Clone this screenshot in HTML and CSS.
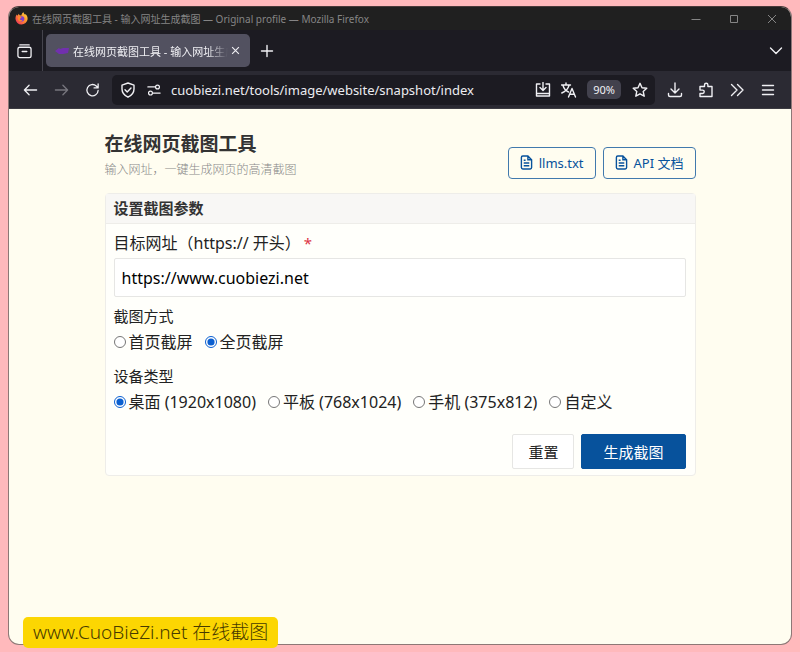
FILE: index.html
```html
<!DOCTYPE html>
<html lang="zh-CN">
<head>
  <meta charset="UTF-8" />
  <meta name="viewport" content="width=device-width, initial-scale=1.0"/>
  <title>在线网页截图工具 - 输入网址生成截图</title>
  <link rel="stylesheet" href="styles.css">
</head>
<body>

  <div class="window">
    <header class="titlebar">
      <svg class="logo" viewBox="0 0 16 16">
        <defs>
          <linearGradient id="fox" x1="1" y1="0" x2="0" y2="1">
            <stop offset="0" stop-color="#ffe14a"/>
            <stop offset=".4" stop-color="#ff9a2e"/>
            <stop offset="1" stop-color="#f0245e"/>
          </linearGradient>
        </defs>
        <path fill="url(#fox)" d="M2.2 3.2 3.4 4.6 4.4 2l1.4 2 2 .2C8.200 2.300 9 1 10.600.2c.1 1.500 1 2.100 2 3.200l.4-1c2 2 2.700 4 2.500 6.500A7.500 7.500 0 0 1 .6 8.600C.5 6.500 1 4.800 2.200 3.200z"/>
        <circle cx="8.300" cy="8.400" r="3.200" fill="#7a3fd0"/>
        <path fill="#ff8a2a" d="M3.500 6.200c1.500-.8 3-.3 4.700.6-.5 1-2 .7-2.400 1.700.4 1.500 2.300 1.800 3.700 1-.8 2-4 2.500-5.500.3z"/>
      </svg>
      <span class="window-title">在线网页截图工具 - 输入网址生成截图 — Original profile — Mozilla Firefox</span>
      <div class="window-buttons">
        <button title="最小化"><svg viewBox="0 0 10 10"><path d="M.5 5.500h9"/></svg></button>
        <button title="最大化"><svg viewBox="0 0 10 10"><path d="M1.500 1.500h7v7h-7z"/></svg></button>
        <button title="关闭"><svg viewBox="0 0 10 10"><path d="m1 1 8 8M9 1 1 9"/></svg></button>
      </div>
    </header>

    <div class="tabstrip">
      <button class="icon-btn sidebar-btn" title="标签页">
        <svg viewBox="0 0 16 16"><path d="M3 1.500h10"/><rect x="1" y="4" width="14" height="11" rx="2"/><path d="M5.500 8.500h5"/></svg>
      </button>
      <div class="tab">
        <svg class="favicon" viewBox="0 0 14 8"><path fill="#7130ae" d="M0 4 4 1l1 1 3-1h6l-1 5-5 1H4z"/></svg>
        <span class="tab-title">在线网页截图工具 - 输入网址生成截图</span>
        <button class="tab-close" title="关闭标签页"><svg viewBox="0 0 8 8"><path d="m1 1 6 6M7 1 1 7"/></svg></button>
      </div>
      <button class="icon-btn new-tab" title="新建标签页"><svg viewBox="0 0 16 16"><path d="M8 2.500v11M2.500 8h11"/></svg></button>
      <button class="icon-btn all-tabs" title="所有标签页"><svg viewBox="0 0 16 16"><path d="m2.500 5 5.500 5.500L13.500 5"/></svg></button>
    </div>

    <nav class="toolbar">
      <div class="nav-buttons">
        <button class="icon-btn" title="后退"><svg viewBox="0 0 16 16"><path d="M14.500 8h-13M6.500 3l-5 5 5 5"/></svg></button>
        <button class="icon-btn" title="前进" disabled><svg viewBox="0 0 16 16"><path d="M1.500 8h13M9.500 3l5 5-5 5"/></svg></button>
        <button class="icon-btn" title="刷新"><svg viewBox="0 0 16 16"><path d="M14 8.500A6 6 0 1 1 12 3.700L14 5.500M14 1.500v4.300H9.700"/></svg></button>
      </div>
      <div class="urlbar">
        <button class="icon-btn" title="跟踪保护"><svg viewBox="0 0 16 16"><path d="M8 1 14 3.200V7c0 4-2.500 6.500-6 8.200C4.500 13.500 2 11 2 7V3.200z"/><path d="m5 7.800 2.200 2.200L11 6"/></svg></button>
        <button class="icon-btn small" title="网站权限"><svg viewBox="0 0 16 16"><path d="M1 4.500h8M7 11.500h8"/><circle cx="12" cy="4.500" r="2.200"/><circle cx="4" cy="11.500" r="2.200"/></svg></button>
        <input class="url" type="text" aria-label="地址栏" value="cuobiezi.net/tools/image/website/snapshot/index">
        <button class="icon-btn" title="安装"><svg viewBox="0 0 16 16"><path d="M5 2H1.500v12h13V2H11M1.500 11.500h13M8 .5v7.500M5 5.500l3 3 3-3"/></svg></button>
        <button class="icon-btn translate" title="翻译"><svg viewBox="0 0 16 16"><path d="M.5 3h9M5 1v2M2 3.500C3 7 5 9 7.500 10M8 3.500C7 7 4.500 9.500.8 11M7.500 15l3.500-8.500 3.500 8.500M8.700 12.200h4.600"/></svg></button>
        <button class="zoom" title="缩放">90%</button>
        <button class="icon-btn" title="书签"><svg viewBox="0 0 16 16"><path d="m8 1.300 2 4.400 4.800.5-3.600 3.200 1 4.800L8 11.800l-4.200 2.400 1-4.800L1.200 6.200 6 5.700z"/></svg></button>
      </div>
      <div class="tool-buttons">
        <button class="icon-btn" title="下载"><svg viewBox="0 0 16 16"><path d="M8 1v10M4 7l4 4 4-4M1.500 11.500v1.500q0 1.500 1.500 1.500h10q1.500 0 1.500-1.500v-1.500"/></svg></button>
        <button class="icon-btn" title="扩展"><svg viewBox="0 0 16 16"><path d="M2 7V4.500h4.500V3a1.700 1.700 0 0 1 3.400 0v1.500h4.100V14.500H2v-3h2.500a1.700 1.700 0 0 0 0-3.400H2z"/></svg></button>
        <button class="icon-btn" title="更多工具"><svg viewBox="0 0 16 16"><path d="m2.500 2.500 5.500 5.500-5.500 5.500M8.500 2.500 14 8l-5.500 5.500"/></svg></button>
        <button class="icon-btn menu" title="菜单"><svg viewBox="0 0 16 16"><path d="M2.500 3.500h11M2.500 8h11M2.500 12.500h11"/></svg></button>
      </div>
    </nav>

    <main class="page">
      <div class="page-head">
        <div>
          <h1>在线网页截图工具</h1>
          <p class="subtitle">输入网址，一键生成网页的高清截图</p>
        </div>
        <div class="doc-links">
          <a href="#llms"><svg viewBox="0 0 14 16"><path d="M8.500 1H3Q1.500 1 1.500 2.500v11Q1.500 15 3 15h8q1.500 0 1.500-1.500V5zM8.500 1v4h4M4 5.500h2M4 8.500h6M4 11.500h6"/></svg>llms.txt</a>
          <a href="#api"><svg viewBox="0 0 14 16"><path d="M8.500 1H3Q1.500 1 1.500 2.500v11Q1.500 15 3 15h8q1.500 0 1.500-1.500V5zM8.500 1v4h4M4 5.500h2M4 8.500h6M4 11.500h6"/></svg>API 文档</a>
        </div>
      </div>

      <form class="card">
        <h2>设置截图参数</h2>
        <div class="card-body">
          <label class="field-label" for="target">目标网址（https:// 开头）<span class="required">*</span></label>
          <input class="text-input" id="target" type="text" value="https://www.cuobiezi.net">

          <fieldset>
            <legend>截图方式</legend>
            <div class="options">
              <label><input type="radio" name="mode">首页截屏</label>
              <label><input type="radio" name="mode" checked>全页截屏</label>
            </div>
          </fieldset>

          <fieldset>
            <legend>设备类型</legend>
            <div class="options">
              <label><input type="radio" name="device" checked>桌面 (1920x1080)</label>
              <label><input type="radio" name="device">平板 (768x1024)</label>
              <label><input type="radio" name="device">手机 (375x812)</label>
              <label><input type="radio" name="device">自定义</label>
            </div>
          </fieldset>

          <div class="actions">
            <button class="btn" type="reset">重置</button>
            <button class="btn primary" type="button">生成截图</button>
          </div>
        </div>
      </form>
    </main>
  </div>

  <div class="watermark">www.CuoBieZi.net 在线截图</div>

</body>
</html>
```
FILE: styles.css
```css
* {
  box-sizing: border-box;
}

body {
  margin: 0;
  min-height: 100vh;
  padding: 6px 8px 7px;
  display: flex;
  position: relative;
  background: #ffb9bc;
  color: #222;
  font-family: "Noto Sans", "Noto Sans CJK SC", sans-serif;
  font-size: 15px;
}

button,
input {
  font-family: inherit;
}

button {
  padding: 0;
  border: none;
  background: none;
  color: inherit;
  cursor: pointer;
}

svg {
  display: block;
  flex: none;
  fill: none;
  stroke: currentColor;
}

.window {
  flex: 1;
  min-width: 0;
  display: flex;
  flex-direction: column;
  border: 1px solid #8e7876;
  border-top-color: #49393a;
  border-radius: 11px;
  overflow: hidden;
  background: #fffdf0;
}

/* browser chrome */
.titlebar {
  height: 23px;
  display: flex;
  align-items: center;
  padding: 0 14px 0 6px;
  background: #202020;
  color: #858585;
}

.logo {
  width: 13px;
  height: 13px;
  stroke: none;
}

.window-title {
  flex: 1;
  margin-left: 4px;
  font-size: 10px;
  white-space: nowrap;
  overflow: hidden;
}

.window-buttons {
  display: flex;
  gap: 28px;
}

.window-buttons svg {
  width: 10px;
  height: 10px;
}

.icon-btn {
  flex: none;
  width: 16px;
  height: 16px;
}

.icon-btn svg {
  width: 100%;
  height: 100%;
  stroke-width: 1.4;
  stroke-linecap: round;
  stroke-linejoin: round;
}

.icon-btn:disabled {
  color: #77767e;
}

.tabstrip {
  height: 41px;
  display: flex;
  align-items: center;
  padding-right: 7px;
  background: #1c1b22;
  color: #f0f0f4;
}

.sidebar-btn {
  width: 34px;
  height: 100%;
  padding: 0 10px 0 8px;
  border-right: 1px solid #45444d;
}

.sidebar-btn svg {
  height: 16px;
}

.tab {
  width: 204px;
  height: 33px;
  display: flex;
  align-items: center;
  margin-left: 3px;
  padding: 0 10px 0 9px;
  border-radius: 5px;
  background: #525160;
}

.favicon {
  width: 14px;
  height: 8px;
  margin-right: 4px;
  stroke: none;
}

.tab-title {
  flex: 1;
  min-width: 0;
  font-size: 11px;
  white-space: nowrap;
  overflow: hidden;
  mask-image: linear-gradient(to left, transparent, #000 20px);
}

.tab-close svg {
  width: 9px;
  height: 9px;
  margin-left: 3px;
}

.new-tab {
  margin-left: 9px;
}

.all-tabs {
  margin-left: auto;
}

.toolbar {
  height: 38px;
  display: flex;
  align-items: center;
  gap: 12px;
  padding: 0 15px 0 14px;
  border-bottom: 1px solid #3c3b42;
  background: #2b2a33;
  color: #f0f0f4;
}

.nav-buttons {
  display: flex;
  gap: 16px;
}

.nav-buttons .icon-btn {
  width: 15px;
}

.urlbar {
  flex: 1;
  min-width: 0;
  height: 30px;
  display: flex;
  align-items: center;
  padding: 0 7px 0 8px;
  border-radius: 5px;
  background: #1c1b22;
}

.small {
  width: 14px;
  margin: 0 10px 0 11px;
}

.url {
  flex: 1;
  min-width: 0;
  padding: 0;
  border: none;
  outline: none;
  background: none;
  color: #ececf1;
  font-size: 13px;
}

.translate {
  margin: 0 10px;
}

.zoom {
  width: 34px;
  height: 19px;
  margin-right: 11px;
  border-radius: 5px;
  background: #42414d;
  font-size: 11px;
}

.tool-buttons {
  display: flex;
  gap: 15px;
}

/* page */
.page {
  width: 100%;
  max-width: 591px;
  margin: 0 auto;
  padding: 20px 0;
}

.page-head {
  display: flex;
  justify-content: space-between;
  align-items: center;
  margin-bottom: 13px;
}

h1 {
  margin: 0;
  color: #333;
  font-size: 19px;
  line-height: 30px;
}

.subtitle {
  margin: 0;
  color: #888;
  font-size: 12px;
  font-weight: 300;
  line-height: 21px;
}

.doc-links {
  display: flex;
  gap: 7px;
  padding-top: 16px;
}

.doc-links a {
  height: 32px;
  display: flex;
  align-items: center;
  gap: 6px;
  padding: 0 11px;
  border: 1px solid #4179ad;
  border-radius: 4px;
  color: #07529c;
  font-size: 13px;
  text-decoration: none;
}

.doc-links svg {
  width: 13px;
  height: 15px;
  stroke-width: 1.5;
}

.card {
  border: 1px solid #eeede9;
  border-radius: 4px;
  background: #fffffb;
}

h2 {
  margin: 0;
  padding: 0 8px;
  border-bottom: 1px solid #eeede9;
  background: #f8f7f5;
  color: #333;
  font-size: 15px;
  line-height: 29px;
}

.card-body {
  padding: 7px 9px 6px 8px;
}

.field-label {
  display: block;
  margin-bottom: 3px;
  font-size: 16px;
  line-height: 24px;
}

.required {
  margin-left: 3px;
  color: #dc3545;
  font-size: 15px;
}

.text-input {
  display: block;
  width: 100%;
  height: 39px;
  margin-bottom: 6px;
  padding: 0 7px;
  border: 1px solid #e6e6e4;
  border-radius: 2px;
  background: #fff;
  color: #000;
  font-size: 16px;
}

fieldset {
  margin: 0 0 8px;
  padding: 0;
  border: none;
}

legend {
  padding: 0;
  line-height: 26px;
}

.options {
  display: flex;
  flex-wrap: wrap;
  column-gap: 12px;
  font-size: 16px;
  line-height: 26px;
}

.options label {
  display: flex;
  align-items: center;
}

.options input {
  width: 12px;
  height: 12px;
  margin: 0 3px 0 0;
  accent-color: #0a5fd0;
}

.actions {
  display: flex;
  justify-content: flex-end;
  gap: 7px;
  padding-top: 11px;
}

.btn {
  height: 35px;
  padding: 0 15px;
  border: 1px solid #e6e6e4;
  border-radius: 2px;
  background: #fff;
  font-size: 15px;
}

.primary {
  padding: 0 21px;
  border-color: #07529c;
  background: #07529c;
  color: #fff;
}

.watermark {
  position: absolute;
  left: 23px;
  bottom: 4px;
  padding: 0 10px;
  border-radius: 5px;
  background: #fcd602;
  color: #473a00;
  font-size: 19px;
  font-weight: 300;
  line-height: 31px;
}
```
